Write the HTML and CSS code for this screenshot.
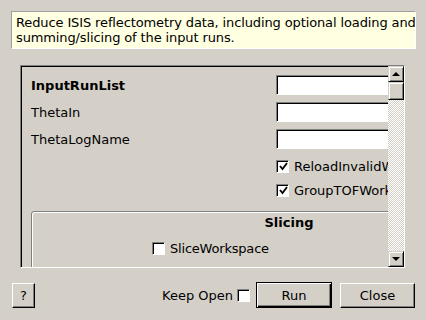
FILE: index.html
```html
<!DOCTYPE html>
<html lang="en">
<head>
	<meta charset="UTF-8">
	<title>ReflectometryReductionOneAuto</title>
	<link rel="stylesheet" href="styles.css">
</head>
<body>
	<div class="desc">Reduce ISIS reflectometry data, including optional loading and<br>summing/slicing of the input runs.</div>

	<div class="scroll">
		<div class="viewport">
			<div class="content">
				<div class="row first">
					<label class="lbl bold">InputRunList</label>
					<input class="field" type="text">
				</div>
				<div class="row">
					<label class="lbl">ThetaIn</label>
					<input class="field" type="text">
				</div>
				<div class="row">
					<label class="lbl">ThetaLogName</label>
					<input class="field" type="text">
				</div>
				<div class="row check first-check">
					<span class="lbl"></span>
					<span class="box checked"><svg width="9" height="9" viewBox="0 0 9 9"><path d="M1 4 L3.5 7 L8 1" fill="none" stroke="#000" stroke-width="1.8"/></svg></span>
					<span class="boxtext">ReloadInvalidWorkspaces</span>
				</div>
				<div class="row check">
					<span class="lbl"></span>
					<span class="box checked"><svg width="9" height="9" viewBox="0 0 9 9"><path d="M1 4 L3.5 7 L8 1" fill="none" stroke="#000" stroke-width="1.8"/></svg></span>
					<span class="boxtext">GroupTOFWorkspaces</span>
				</div>

				<div class="group">
					<div class="group-title">Slicing</div>
					<div class="group-row">
						<span class="box"></span>
						<span class="boxtext">SliceWorkspace</span>
					</div>
				</div>
			</div>
		</div>
		<div class="scrollbar">
			<div class="sb-btn"><span class="arrow-up"></span></div>
			<div class="sb-thumb"></div>
			<div class="sb-track"></div>
			<div class="sb-btn"><span class="arrow-down"></span></div>
		</div>
	</div>

	<div class="buttons">
		<button class="btn help">?</button>
		<span class="spacer"></span>
		<span class="keep">Keep Open</span>
		<span class="box keepbox"></span>
		<button class="btn run">Run</button>
		<button class="btn close">Close</button>
	</div>
</body>
</html>
```

FILE: styles.css
```css
* {
	margin: 0;
	padding: 0;
	box-sizing: border-box;
}

body {
	background: #d4d0c8;
	font-family: "DejaVu Sans", sans-serif;
	font-size: 13px;
	color: #000;
	width: 426px;
	height: 320px;
	overflow: hidden;
}

.desc {
	margin: 11px 0 0 11px;
	width: 405px;
	height: 38px;
	padding: 3px 2px 0 4px;
	line-height: 15px;
	letter-spacing: -0.12px;
	white-space: nowrap;
	overflow: hidden;
	background: #ffffe1;
	border: 1px solid;
	border-color: #a0a0a0 #fff #fff #a0a0a0;
}

.scroll {
	display: flex;
	margin: 16px 0 0 20px;
	width: 385px;
	height: 203px;
	border: 1px solid;
	border-color: #808080 #fff #fff #808080;
	box-shadow: inset 1px 1px #000;
	padding: 1px 0 0 1px;
}

.viewport {
	flex: 1;
	overflow: hidden;
}

.content {
	width: 540px;
	padding: 8px 0 0 9px;
}

.row {
	display: flex;
	align-items: center;
	height: 20px;
	margin-bottom: 7px;
}

.lbl {
	width: 245px;
	flex: none;
}

.bold {
	font-weight: bold;
}

.field {
	width: 272px;
	height: 20px;
	background: #fff;
	border: 1px solid;
	border-color: #808080 #fff #fff #808080;
	box-shadow: inset 1px 1px #000;
	outline: none;
}

.row.first-check {
	margin-top: 0;
	margin-bottom: 4px;
}

.row.check {
	margin-bottom: 4px;
}

.box {
	display: inline-flex;
	align-items: center;
	justify-content: center;
	width: 13px;
	height: 13px;
	flex: none;
	background: #fff;
	border: 1px solid;
	border-color: #808080 #fff #fff #808080;
	box-shadow: inset 1px 1px #000;
}

.box svg {
	margin: 1px 0 0 1px;
}

.boxtext {
	margin-left: 5px;
	white-space: nowrap;
}

.group {
	margin: 11px 0 0 0;
	width: 516px;
	height: 80px;
	border: 1px solid #808080;
	border-radius: 3px;
	box-shadow: inset 1px 1px #fff;
}

.group-title {
	font-weight: bold;
	text-align: center;
	margin-top: 3px;
	line-height: 15px;
}

.group-row {
	display: flex;
	align-items: center;
	margin: 11px 0 0 120px;
	letter-spacing: -0.2px;
}

.scrollbar {
	width: 16px;
	flex: none;
	display: flex;
	flex-direction: column;
	margin-top: -1px;
}

.sb-btn,
.sb-thumb {
	background: #d4d0c8;
	border: 1px solid;
	border-color: #d4d0c8 #000 #000 #d4d0c8;
	box-shadow: inset 1px 1px #fff, inset -1px -1px #808080;
}

.sb-btn {
	height: 16px;
	display: flex;
	align-items: center;
	justify-content: center;
}

.sb-thumb {
	height: 18px;
}

.sb-track {
	flex: 1;
	background-color: #fff;
	background-image:
		linear-gradient(45deg, #d4d0c8 25%, transparent 25%, transparent 75%, #d4d0c8 75%),
		linear-gradient(45deg, #d4d0c8 25%, transparent 25%, transparent 75%, #d4d0c8 75%);
	background-size: 2px 2px;
	background-position: 0 0, 1px 1px;
}

.arrow-up {
	width: 0;
	height: 0;
	border-left: 4px solid transparent;
	border-right: 4px solid transparent;
	border-bottom: 4px solid #000;
}

.arrow-down {
	width: 0;
	height: 0;
	border-left: 4px solid transparent;
	border-right: 4px solid transparent;
	border-top: 4px solid #000;
}

.buttons {
	display: flex;
	align-items: center;
	margin: 14px 0 0 12px;
	width: 403px;
	height: 26px;
}

.btn {
	font-family: "DejaVu Sans", sans-serif;
	font-size: 13px;
	color: #000;
	background: #d4d0c8;
	border: 1px solid;
	border-color: #fff #000 #000 #fff;
	box-shadow: inset -1px -1px #808080;
	height: 25px;
}

.help {
	width: 23px;
}

.spacer {
	flex: 1;
}

.keep {
	margin-right: 4px;
}

.keepbox {
	margin-right: 6px;
}

.run {
	width: 76px;
	height: 26px;
	border: 1px solid #000;
	box-shadow: inset 1px 1px #fff, inset -1px -1px #000, inset -2px -2px #808080;
	margin-right: 8px;
}

.close {
	width: 75px;
}
```
